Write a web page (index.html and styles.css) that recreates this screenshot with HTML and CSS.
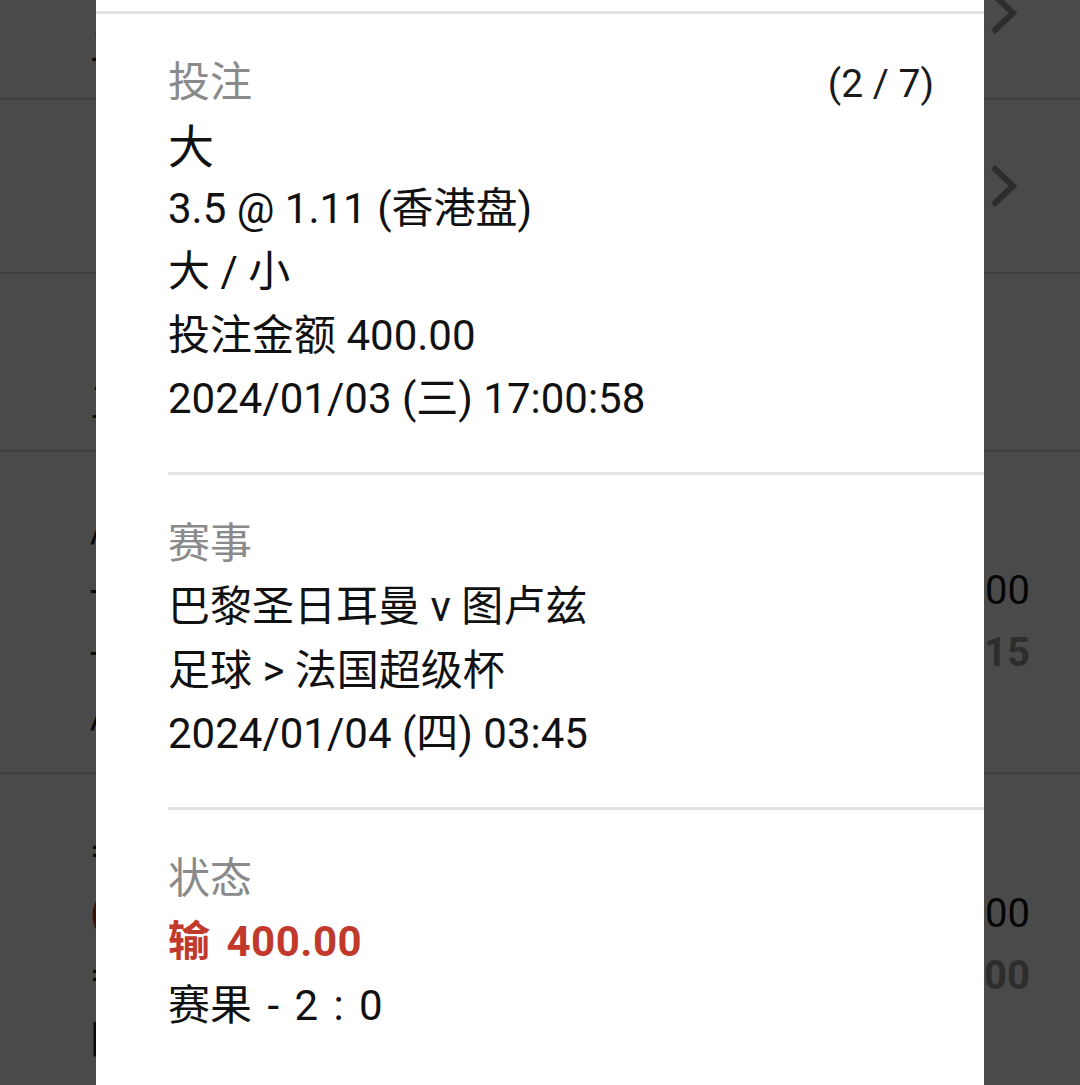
FILE: index.html
```html
<!DOCTYPE html>
<html lang="zh-CN">
<head>
<meta charset="utf-8">
<title>投注详情</title>
<link rel="stylesheet" href="styles.css">
</head>
<body>
<main class="list" aria-hidden="true">
  <div class="row row-a">
    <div class="row-lines">
      <div class="line-item"><span class="bg-text">一二</span></div>
      <div class="line-item"><span class="bg-text">二</span></div>
    </div>
    <svg class="chev" viewBox="0 0 30 46" width="30" height="46"><polyline points="5,4 25,23 5,42" fill="none" stroke="#9a9a9a" stroke-width="6"/></svg>
  </div>
  <div class="row row-b">
    <div class="row-lines"><div class="line-item"><span class="bg-text">&nbsp;</span></div></div>
    <svg class="chev" viewBox="0 0 30 46" width="30" height="46"><polyline points="5,4 25,23 5,42" fill="none" stroke="#9a9a9a" stroke-width="6"/></svg>
  </div>
  <div class="row row-c">
    <div class="row-lines"><div class="line-item"><span class="bg-text">三</span></div></div>
  </div>
  <div class="row row-d">
    <div class="row-lines">
      <div class="line-item"><span class="bg-text">/</span></div>
      <div class="line-item"><span class="bg-text">-</span><span class="bg-val">400.00</span></div>
      <div class="line-item"><span class="bg-text">-</span><span class="bg-val bold">1.15</span></div>
      <div class="line-item"><span class="bg-text">/</span></div>
    </div>
  </div>
  <div class="row row-e">
    <div class="row-lines">
      <div class="line-item"><span class="bg-text">=</span></div>
      <div class="line-item"><span class="bg-text red">(</span><span class="bg-val">400.00</span></div>
      <div class="line-item"><span class="bg-text">=</span><span class="bg-val bold">400.00</span></div>
      <div class="line-item"><span class="bg-text">|</span></div>
    </div>
  </div>
</main>

<div class="overlay"></div>

<section class="sheet" role="dialog" aria-label="投注详情">
  <div class="sheet-rule"></div>

  <div class="block">
    <div class="block-head">
      <span class="label">投注</span>
      <span class="pager">(2 / 7)</span>
    </div>
    <div class="title">大</div>
    <div class="line">3.5 @ 1.11 (香港盘)</div>
    <div class="line">大 / 小</div>
    <div class="line">投注金额 400.00</div>
    <div class="line">2024/01/03 (三) 17:00:58</div>
  </div>

  <hr class="divider">

  <div class="block">
    <div class="label">赛事</div>
    <div class="line">巴黎圣日耳曼 v 图卢兹</div>
    <div class="line">足球 &gt; 法国超级杯</div>
    <div class="line">2024/01/04 (四) 03:45</div>
  </div>

  <hr class="divider">

  <div class="block">
    <div class="label">状态</div>
    <div class="line result-lose">输 400.00</div>
    <div class="line">赛果<span class="score"> - 2 : 0</span></div>
  </div>
</section>
</body>
</html>
```

FILE: styles.css
```css
html, body {
  margin: 0;
  padding: 0;
  height: 100%;
  overflow: hidden;
}

body {
  background: #ffffff;
  font-family: Roboto, "Noto Sans CJK SC", "Noto Sans", sans-serif;
  color: #111111;
}

/* ---------- list behind the dialog ---------- */
.list {
  display: flex;
  flex-direction: column;
}

.row {
  display: flex;
  align-items: center;
  justify-content: space-between;
  box-sizing: border-box;
  padding: 0 62px 0 90px;
  border-bottom: 2px solid #dddddd;
}

.row-a { height: 172px; margin-top: -72px; }
.row-b { height: 174px; }
.row-c { height: 178px; align-items: flex-start; padding-top: 95px; }
.row-d { height: 322px; align-items: flex-start; padding-top: 45px; padding-right: 50px; }
.row-e { height: 340px; align-items: flex-start; padding-top: 46px; padding-right: 50px; }

.row-lines {
  flex: 1;
  display: flex;
  flex-direction: column;
}

.line-item {
  display: flex;
  justify-content: space-between;
  align-items: center;
  height: 62px;
  font-size: 40px;
}

.bg-text { color: #222222; }
.bg-text.red { color: #c0392b; }
.bg-val { color: #111111; }
.bg-val.bold { font-weight: 700; color: #9a9a9a; }

.chev { display: block; }

/* ---------- dim overlay ---------- */
.overlay {
  position: fixed;
  inset: 0;
  background: rgba(0, 0, 0, 0.71);
}

/* ---------- dialog sheet ---------- */
.sheet {
  position: fixed;
  top: 0;
  bottom: 0;
  left: 96px;
  width: 888px;
  background: #ffffff;
  padding-top: 11px;
  box-sizing: border-box;
}

.sheet-rule {
  height: 3px;
  background: #e2e2e2;
}

.block {
  padding: 37px 50px 41px 72px;
  font-size: 42px;
  line-height: 63.5px;
  color: #111111;
}

.block-head {
  display: flex;
  justify-content: space-between;
  align-items: baseline;
}

.label {
  color: #8a8a8a;
}

.pager {
  font-size: 39px;
  color: #1a1a1a;
}

.title {
  font-size: 46px;
  line-height: 60px;
}

.line {
  white-space: nowrap;
}

.result-lose {
  color: #c0392b;
  font-weight: 700;
  word-spacing: 5px;
  letter-spacing: 0.5px;
}

.score {
  word-spacing: 5px;
}

.divider {
  margin: 0 0 0 72px;
  border: 0;
  height: 3px;
  background: #e2e2e2;
}
```
